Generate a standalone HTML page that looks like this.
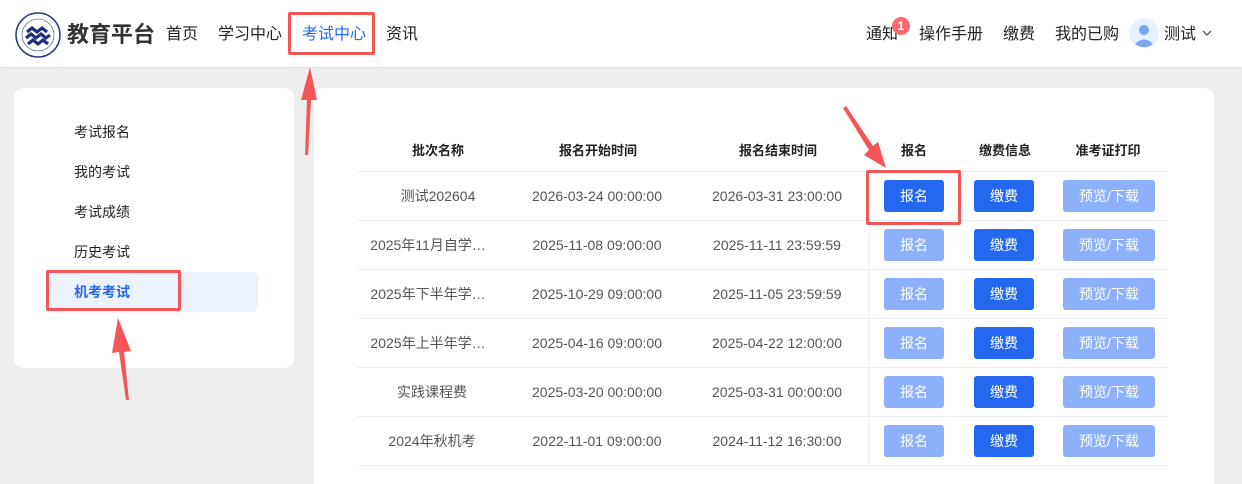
<!DOCTYPE html>
<html><head><meta charset="utf-8"><style>
*{margin:0;padding:0;box-sizing:border-box}
html,body{width:1242px;height:484px;overflow:hidden}
body{background:#eeeeee;font-family:"Liberation Sans","Noto Sans CJK SC",sans-serif;position:relative;color:#222}
.hdr{position:absolute;left:0;top:0;width:1242px;height:67px;background:#fff;box-shadow:0 1px 3px rgba(0,0,0,.06)}
.a{position:absolute;white-space:nowrap}
.nav{font-size:16px;top:24px;line-height:22px;color:#222}
.side{position:absolute;left:14px;top:88px;width:280px;height:280px;background:#fff;border-radius:10px}
.si{position:absolute;left:74px;font-size:14px;line-height:16px;color:#222}
.main{position:absolute;left:314px;top:88px;width:900px;height:396px;background:#fff;border-radius:10px 10px 0 0}
.th{position:absolute;top:143px;font-size:13px;line-height:16px;font-weight:bold;color:#222;transform:translateX(-50%)}
.line{position:absolute;left:358px;width:810px;height:1px;background:#ebeef5}
.td{position:absolute;font-size:14px;line-height:20px;height:20px;color:#555;transform:translateX(-50%)}
.btn{position:absolute;height:32px;border-radius:3px;color:#fff;font-size:14px;text-align:center;line-height:32px}
.b1{background:#2468f2}.b2{background:#8cb0fa}
.box{position:absolute;border:3px solid #f45556;border-radius:2px}
</style></head><body>
<div class="hdr"></div>
<svg class="a" style="left:15px;top:12px" width="46" height="46" viewBox="0 0 46 46"><circle cx="23" cy="23" r="22" fill="#fff" stroke="#2a3b80" stroke-width="1.5"/><circle cx="23" cy="23" r="16" fill="none" stroke="#2a3b80" stroke-width=".6"/><g stroke="#1f2f7a" stroke-width="3.2" fill="none"><path d="M12 20 l5 -4 l5 4 l5 -4 l5 4"/><path d="M11 26 l5 -4 l5 4 l5 -4 l5 4 l4 -3"/><path d="M13 32 l5 -4 l5 4 l5 -4 l5 4"/></g></svg>
<div class="a" style="left:67px;top:21px;font-size:22px;line-height:28px;font-weight:bold;color:#333">教育平台</div>
<div class="a nav" style="left:166px">首页</div>
<div class="a nav" style="left:218px">学习中心</div>
<div class="a nav" style="left:302px;color:#2468f2">考试中心</div>
<div class="a nav" style="left:386px">资讯</div>
<div class="box" style="left:288px;top:12px;width:87px;height:43px"></div>
<div class="a nav" style="left:866px">通知</div>
<div class="a" style="left:892px;top:17px;width:18px;height:18px;border-radius:9px;background:#f56c6c;color:#fff;font-size:12px;text-align:center;line-height:18px;font-weight:bold">1</div>
<div class="a nav" style="left:919px">操作手册</div>
<div class="a nav" style="left:1003px">缴费</div>
<div class="a nav" style="left:1055px">我的已购</div>
<svg class="a" style="left:1129px;top:18px" width="30" height="30" viewBox="0 0 30 30"><circle cx="15" cy="15" r="15" fill="#e6f0ff"/><circle cx="15" cy="12" r="5" fill="#7aa5f2"/><path d="M6 26 q9 -9 18 0 q-9 6 -18 0z" fill="#7aa5f2"/></svg>
<div class="a nav" style="left:1164px">测试</div>
<svg class="a" style="left:1202px;top:30px" width="10" height="7"><path d="M1 1 L5 5 L9 1" stroke="#444" fill="none" stroke-width="1.2"/></svg>

<div class="side"></div>
<div class="si" style="top:124px">考试报名</div>
<div class="si" style="top:164px">我的考试</div>
<div class="si" style="top:204px">考试成绩</div>
<div class="si" style="top:244px">历史考试</div>
<div class="a" style="left:47px;top:272px;width:211px;height:40px;background:#ebf2fe;border-radius:5px"></div>
<div class="si" style="top:284px;color:#2468f2;font-weight:bold">机考考试</div>
<div class="box" style="left:46px;top:270px;width:135px;height:41px"></div>

<div class="main"></div>
<div class="th" style="left:438px">批次名称</div>
<div class="th" style="left:598px">报名开始时间</div>
<div class="th" style="left:778px">报名结束时间</div>
<div class="th" style="left:914px">报名</div>
<div class="th" style="left:1005px">缴费信息</div>
<div class="th" style="left:1108px">准考证打印</div>
<div class="a" style="left:868px;top:172px;width:2px;height:294px;background:linear-gradient(90deg,#eee,#fff)"></div>
<div class="line" style="top:171px"></div><div class="line" style="top:220px"></div><div class="line" style="top:269px"></div><div class="line" style="top:318px"></div><div class="line" style="top:367px"></div><div class="line" style="top:416px"></div><div class="line" style="top:465px"></div>

<div class="td" style="left:438px;top:186px">测试202604</div><div class="td" style="left:597px;top:186px">2026-03-24 00:00:00</div><div class="td" style="left:777px;top:186px">2026-03-31 23:00:00</div>
<div class="td" style="left:428px;top:235px">2025年11月自学…</div><div class="td" style="left:597px;top:235px">2025-11-08 09:00:00</div><div class="td" style="left:777px;top:235px">2025-11-11 23:59:59</div>
<div class="td" style="left:428px;top:284px">2025年下半年学…</div><div class="td" style="left:597px;top:284px">2025-10-29 09:00:00</div><div class="td" style="left:777px;top:284px">2025-11-05 23:59:59</div>
<div class="td" style="left:428px;top:333px">2025年上半年学…</div><div class="td" style="left:597px;top:333px">2025-04-16 09:00:00</div><div class="td" style="left:777px;top:333px">2025-04-22 12:00:00</div>
<div class="td" style="left:432px;top:382px">实践课程费</div><div class="td" style="left:597px;top:382px">2025-03-20 00:00:00</div><div class="td" style="left:777px;top:382px">2025-03-31 00:00:00</div>
<div class="td" style="left:432px;top:431px">2024年秋机考</div><div class="td" style="left:597px;top:431px">2022-11-01 09:00:00</div><div class="td" style="left:777px;top:431px">2024-11-12 16:30:00</div>

<div class="btn b1" style="left:884px;top:180px;width:60px">报名</div>
<div class="btn b2" style="left:884px;top:229px;width:60px">报名</div>
<div class="btn b2" style="left:884px;top:278px;width:60px">报名</div>
<div class="btn b2" style="left:884px;top:327px;width:60px">报名</div>
<div class="btn b2" style="left:884px;top:376px;width:60px">报名</div>
<div class="btn b2" style="left:884px;top:425px;width:60px">报名</div>
<div class="btn b1" style="left:974px;top:180px;width:60px">缴费</div>
<div class="btn b1" style="left:974px;top:229px;width:60px">缴费</div>
<div class="btn b1" style="left:974px;top:278px;width:60px">缴费</div>
<div class="btn b1" style="left:974px;top:327px;width:60px">缴费</div>
<div class="btn b1" style="left:974px;top:376px;width:60px">缴费</div>
<div class="btn b1" style="left:974px;top:425px;width:60px">缴费</div>
<div class="btn b2" style="left:1063px;top:180px;width:92px">预览/下载</div>
<div class="btn b2" style="left:1063px;top:229px;width:92px">预览/下载</div>
<div class="btn b2" style="left:1063px;top:278px;width:92px">预览/下载</div>
<div class="btn b2" style="left:1063px;top:327px;width:92px">预览/下载</div>
<div class="btn b2" style="left:1063px;top:376px;width:92px">预览/下载</div>
<div class="btn b2" style="left:1063px;top:425px;width:92px">预览/下载</div>
<div class="box" style="left:866px;top:170px;width:95px;height:55px"></div>

<svg class="a" style="left:0;top:0" width="1242" height="484">
<g fill="#f45556">
<path d="M305 155 L308 155 L311 100 L317 100 L310 67 L301 100 L307 100Z"/>
<path d="M126 400 L129 400 L124 352 L131 351 L118 318 L112 353 L119 352Z"/>
<path d="M843 108 L846 106 L873 146 L878 142 L886 168 L864 155 L869 150Z"/>
</g></svg>
</body></html>
